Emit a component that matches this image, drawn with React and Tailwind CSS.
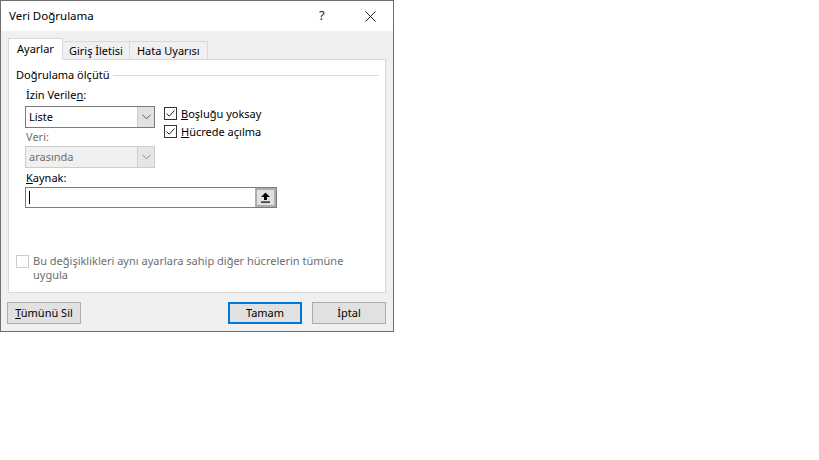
const font = { fontFamily: '"Segoe UI", "Noto Sans", sans-serif' }

function Checkbox({ checked, disabled, children }) {
  return (
    <div className="flex items-start gap-[4px]">
      <span
        className={`mt-[1px] grid place-items-center w-[13px] h-[13px] shrink-0 border bg-white ${
          disabled ? 'border-[#cccccc]' : 'border-[#333333]'
        }`}
      >
        {checked && (
          <svg width="11" height="11" viewBox="0 0 11 11">
            <path d="M1.5 5.5 L4.2 8.2 L9.5 2.5" fill="none" stroke="#222" strokeWidth="1" />
          </svg>
        )}
      </span>
      <span className={disabled ? 'text-[#6d6d6d]' : 'text-black'}>{children}</span>
    </div>
  )
}

function Select({ value, disabled }) {
  return (
    <div
      className={`flex w-[130px] h-[22px] border ${
        disabled ? 'border-[#cccccc] bg-[#f0f0f0] text-[#6d6d6d]' : 'border-[#7a7a7a] bg-white text-black'
      }`}
    >
      <span className="flex-1 pl-[3px] leading-[20px]">{value}</span>
      <span
        className={`w-[17px] grid place-items-center border-l ${
          disabled ? 'border-[#cccccc] bg-[#e6e6e6]' : 'border-[#cccccc] bg-[#e1e1e1]'
        }`}
      >
        <svg width="9" height="6" viewBox="0 0 9 6">
          <path d="M0.5 0.8 L4.5 4.8 L8.5 0.8" fill="none" stroke={disabled ? '#888' : '#555'} strokeWidth="1" />
        </svg>
      </span>
    </div>
  )
}

function Button({ children, primary, className = '' }) {
  return (
    <div
      className={`w-[74px] h-[22px] grid place-items-center bg-[#e1e1e1] ${
        primary ? 'border-2 border-[#0078d7]' : 'border border-[#adadad]'
      } ${className}`}
    >
      {children}
    </div>
  )
}

export default function App() {
  return (
    <div className="w-full h-[460px] bg-white text-[11px] text-black" style={font}>
      <div className="w-[394px] h-[332px] border border-[#6f6f6f] flex flex-col">
        {/* title bar */}
        <div className="h-[30px] bg-white flex items-center pl-[8px] shrink-0 text-[11.5px]">
          <span className="flex-1">Veri Doğrulama</span>
          <span className="w-[14px] text-[13px] mr-[32px] text-[#222]">?</span>
          <svg width="11" height="11" viewBox="0 0 11 11" className="mr-[17px]">
            <path d="M0.5 0.5 L10.5 10.5 M10.5 0.5 L0.5 10.5" stroke="#222" strokeWidth="1" />
          </svg>
        </div>

        <div className="flex-1 bg-[#f0f0f0] flex flex-col px-[7px] pt-[7px]">
          {/* tabs */}
          <div className="flex items-end h-[22px] -mb-px relative z-10">
            <div className="h-[22px] px-[8px] bg-white border border-b-0 border-[#d9d9d9] leading-[20px]">
              Ayarlar
            </div>
            <div className="h-[19px] px-[6px] border border-l-0 border-b-0 border-[#d9d9d9] leading-[18px]">
              Giriş İletisi
            </div>
            <div className="h-[19px] px-[7px] border border-l-0 border-b-0 border-[#d9d9d9] leading-[18px]">
              Hata Uyarısı
            </div>
          </div>

          {/* panel */}
          <div className="h-[234px] bg-white border border-[#d9d9d9] flex flex-col pl-[7px] pr-[6px] pt-[7px]">
            <div className="flex items-center gap-[4px] h-[16px]">
              <span>Doğrulama ölçütü</span>
              <span className="flex-1 h-px bg-[#dcdcdc]" />
            </div>

            <div className="pl-[9px] flex flex-col">
              <div className="mt-[4px] h-[16px] leading-[16px] pl-[1px]">
                İzin Verile<span className="underline">n</span>:
              </div>
              <div className="mt-[3px] flex gap-[9px]">
                <div className="flex flex-col">
                  <Select value="Liste" />
                  <div className="h-[17px] leading-[17px] pl-[1px] text-[#6d6d6d]">Veri:</div>
                  <div className="mt-[1px]">
                    <Select value="arasında" disabled />
                  </div>
                </div>
                <div className="flex flex-col">
                  <div className="h-[18px]">
                    <Checkbox checked>
                      <span className="underline">B</span>oşluğu yoksay
                    </Checkbox>
                  </div>
                  <div className="h-[18px]">
                    <Checkbox checked>
                      <span className="underline">H</span>ücrede açılma
                    </Checkbox>
                  </div>
                </div>
              </div>
              <div className="mt-[1px] h-[17px] leading-[17px] pl-[1px]">
                <span className="underline">K</span>aynak:
              </div>
              <div className="mt-[1px] w-[252px] h-[21px] border border-[#7a7a7a] bg-white flex items-center">
                <span className="ml-[3px] w-px h-[13px] bg-black" />
                <span className="flex-1" />
                <span className="w-[21px] h-[19px] border-2 border-[#adadad] bg-[#e1e1e1] grid place-items-center">
                  <svg width="11" height="11" viewBox="0 0 11 11">
                    <path d="M5.5 0.5 L10 5 L7 5 L7 8 L4 8 L4 5 L1 5 Z" fill="#000" />
                    <rect x="1" y="9.5" width="9" height="1.2" fill="#000" />
                  </svg>
                </span>
              </div>
            </div>

            <div className="flex-1" />
            <div className="mb-[10px] leading-[14px] w-[340px]">
              <Checkbox disabled>Bu değişiklikleri aynı ayarlara sahip diğer hücrelerin tümüne uygula</Checkbox>
            </div>
          </div>

          {/* buttons */}
          <div className="flex items-center mt-[9px] -ml-[1px]">
            <Button>
              <span>
                <span className="underline">T</span>ümünü Sil
              </span>
            </Button>
            <span className="flex-1" />
            <Button primary className="mr-[10px]">Tamam</Button>
            <Button>İptal</Button>
          </div>
        </div>
      </div>
    </div>
  )
}
